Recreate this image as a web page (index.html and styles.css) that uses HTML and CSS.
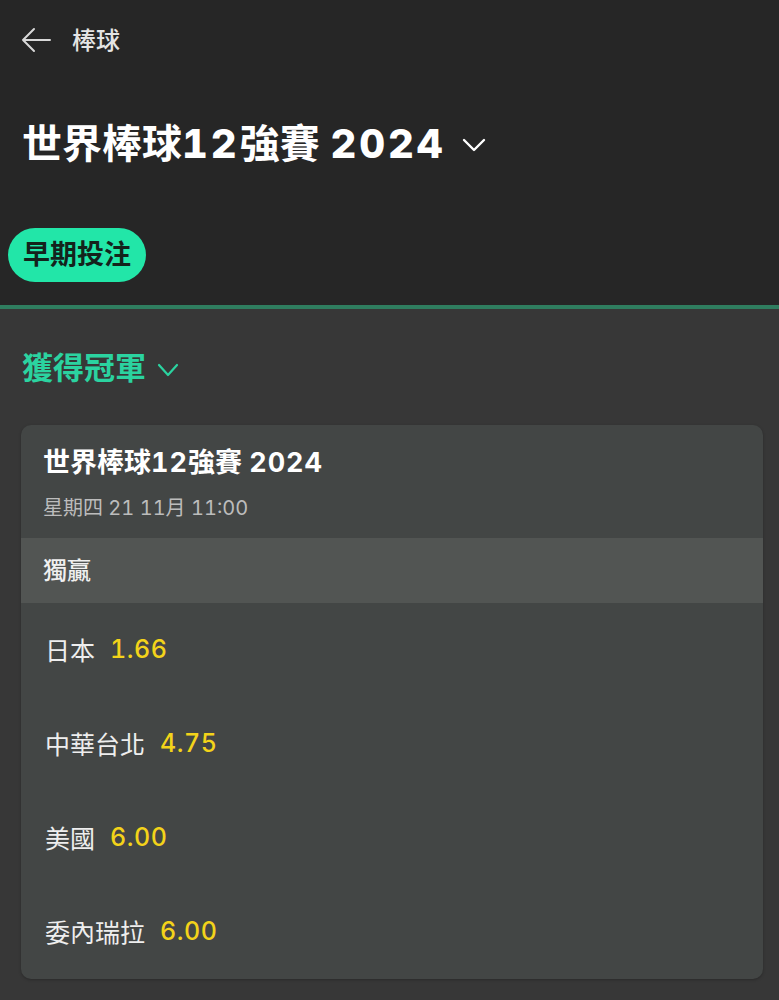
FILE: index.html
```html
<!DOCTYPE html>
<html lang="zh-Hant">
<head>
  <meta charset="UTF-8" />
  <meta name="viewport" content="width=device-width, initial-scale=1" />
  <title>世界棒球12強賽 2024</title>
  <link rel="stylesheet" href="styles.css">
</head>
<body>
  <header class="top">
    <div class="topbar">
      <svg class="back" width="30" height="26" viewBox="0 0 30 26" fill="none" stroke="#d8d8d8" stroke-width="2" stroke-linecap="round" stroke-linejoin="round">
        <path d="M29 13H2M13 2L2 13l11 11" />
      </svg>
      <span class="crumb">棒球</span>
    </div>

    <h1 class="event-title"><span>世界棒球<span class="num">12</span>強賽 <span class="num">2024</span></span>
      <svg class="chev" width="24" height="14" viewBox="0 0 24 14" fill="none" stroke="#ffffff" stroke-width="2.4" stroke-linecap="round" stroke-linejoin="round">
        <path d="M2 2l10 10L22 2" />
      </svg>
    </h1>

    <div class="pills">
      <span class="pill">早期投注</span>
    </div>
  </header>

  <main class="content">
    <h2 class="market-title">獲得冠軍
      <svg class="chev" width="22" height="14" viewBox="0 0 22 14" fill="none" stroke="#2bd3a0" stroke-width="2.2" stroke-linecap="round" stroke-linejoin="round">
        <path d="M2 2l9 10 9-10" />
      </svg>
    </h2>

    <section class="card">
      <div class="card-head">
        <div class="card-title">世界棒球<span class="num">12</span>強賽 <span class="num">2024</span></div>
        <div class="card-date">星期四 21 11月 11:00</div>
      </div>
      <div class="band">獨贏</div>
      <ul class="odds">
        <li><span class="team">日本</span><span class="price">1.66</span></li>
        <li><span class="team">中華台北</span><span class="price">4.75</span></li>
        <li><span class="team">美國</span><span class="price">6.00</span></li>
        <li><span class="team">委內瑞拉</span><span class="price">6.00</span></li>
      </ul>
    </section>
  </main>
</body>
</html>
```

FILE: styles.css
```css
body {
  margin: 0;
  padding: 0;
  font-family: Inter, "Noto Sans CJK TC", sans-serif;
  font-variant-numeric: tabular-nums;
  background: #373737;
  color: #ffffff;
}

.num {
  letter-spacing: 1px;
}

.top {
  background: #262626;
  padding: 0 0 23px 0;
  border-bottom: 4px solid #2f7d5f;
}

.topbar {
  height: 84px;
  display: flex;
  align-items: center;
  padding-left: 21px;
  gap: 21px;
}

.back {
  display: block;
  margin-top: -4px;
}

.crumb {
  font-size: 24px;
  line-height: 30px;
  font-weight: 500;
  color: #e4e4e4;
  margin-top: -2px;
}

.event-title {
  margin: 32px 0 0 0;
  padding-left: 22px;
  font-size: 40px;
  line-height: 56px;
  font-weight: 700;
  display: flex;
  align-items: center;
  gap: 16px;
}

.event-title .num {
  font-weight: 800;
  letter-spacing: 3px;
}

.event-title .chev {
  margin-top: 2px;
}

.pills {
  margin-top: 56px;
  padding-left: 8px;
  display: flex;
}

.pill {
  background: #22e6a8;
  color: #14231c;
  font-size: 27px;
  font-weight: 700;
  height: 54px;
  line-height: 54px;
  padding: 0 15px;
  border-radius: 27px;
}

.content {
  padding: 39px 16px 22px 21px;
}

.market-title {
  margin: 0;
  padding-left: 1px;
  font-size: 31px;
  line-height: 40px;
  font-weight: 700;
  color: #2bd3a0;
  display: flex;
  align-items: center;
  gap: 11px;
}

.market-title .chev {
  margin-top: 4px;
}

.card {
  margin-top: 37px;
  background: #434645;
  border-radius: 10px;
  overflow: hidden;
  box-shadow: 0 1px 3px rgba(0, 0, 0, 0.25);
}

.card-head {
  padding: 20px 22px 16px 22px;
}

.card-title {
  font-size: 27px;
  line-height: 36px;
  font-weight: 700;
}

.card-date {
  margin-top: 13px;
  font-size: 20px;
  line-height: 28px;
  color: #bcbcbc;
}

.band {
  background: #525553;
  height: 65px;
  line-height: 65px;
  padding-left: 22px;
  font-size: 24px;
  font-weight: 500;
  color: #f0f0f0;
}

.odds {
  list-style: none;
  margin: 0;
  padding: 0;
}

.odds li {
  height: 94px;
  display: flex;
  align-items: center;
  gap: 15px;
  padding-left: 24px;
  padding-bottom: 2px;
  box-sizing: border-box;
}

.team {
  font-size: 25px;
  color: #eeeeee;
}

.price {
  font-size: 25px;
  font-weight: 500;
  color: #f3d31a;
  letter-spacing: 0.5px;
}
```
